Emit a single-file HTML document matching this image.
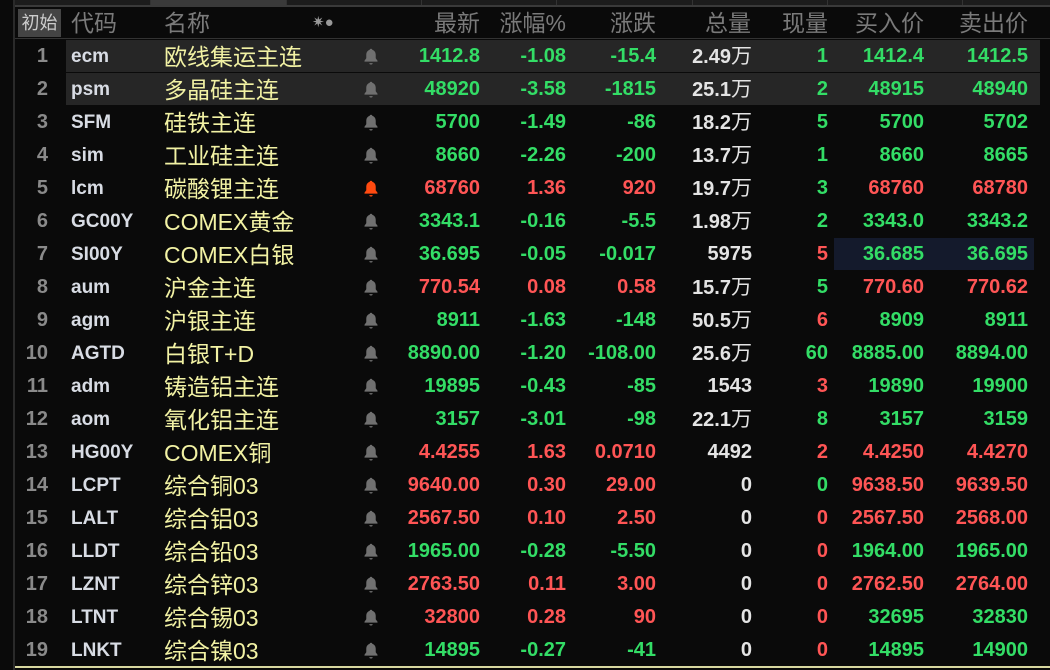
<!DOCTYPE html>
<html><head><meta charset="utf-8"><style>
body{margin:0;width:1050px;height:670px;background:#0a0a0a;overflow:hidden;font-family:"Liberation Sans","Noto Sans CJK SC",sans-serif;position:relative}
.top{position:absolute;left:14px;top:0;width:1036px;height:5px;background:#1c1c1c}
.top i{position:absolute;top:0;height:5px;width:1px;background:#333}
.vl{position:absolute;left:13px;top:0;width:2px;height:670px;background:#2a2a2a}
.hl{position:absolute;left:15px;top:5px;width:1035px;height:2px;background:#3a3a3a}
.hb{position:absolute;left:15px;top:38px;width:1035px;height:1px;background:#333}
.bl{position:absolute;left:15px;top:666px;width:1035px;height:2px;background:#d8d8a0}
.c{position:absolute;white-space:nowrap;line-height:33px}
.h{color:#7a7a7a;font-size:23px;line-height:34px;top:6px}
.r{text-align:right}
.g{color:#33dd66}.rd{color:#ff5555}.w{color:#e4e4e4}
.n{color:#8a8a8a;font-size:20px;font-weight:bold}
.cd{color:#d8dce4;font-size:19px;font-weight:bold}
.nm{color:#f2f2a4;font-size:23px}
.v{font-size:20px;font-weight:bold}
.row{position:absolute;left:0;width:1050px;height:33px}
</style></head><body>
<div class="top"><div style="position:absolute;left:136px;width:136px;height:5px;background:#3a3a3a"></div><i style="left:136px"></i><i style="left:272px"></i><i style="left:407px"></i><i style="left:542px"></i><i style="left:678px"></i><i style="left:813px"></i><i style="left:948px"></i></div>
<div class="vl"></div><div class="hl"></div>
<div style="position:absolute;left:18px;top:9px;width:43px;height:28px;background:#444;color:#ccc;font-size:18px;line-height:28px;text-align:center">初始</div>
<div class="c h" style="left:71px">代码</div>
<div class="c h" style="left:164px">名称</div>
<div class="c h" style="left:312px;font-size:15px;color:#999">✷●</div>
<div class="c h r" style="right:570px">最新</div>
<div class="c h r" style="right:484px">涨幅%</div>
<div class="c h r" style="right:394px">涨跌</div>
<div class="c h r" style="right:299px">总量</div>
<div class="c h r" style="right:222px">现量</div>
<div class="c h r" style="right:126px">买入价</div>
<div class="c h r" style="right:22px">卖出价</div>
<div class="hb"></div>
<div id="rows"></div>
<div class="bl"></div>
<script>
const D=[
["ecm","欧线集运主连","1412.8","-1.08","-15.4","2.49万","1","1412.4","1412.5","g","g","g"],
["psm","多晶硅主连","48920","-3.58","-1815","25.1万","2","48915","48940","g","g","g"],
["SFM","硅铁主连","5700","-1.49","-86","18.2万","5","5700","5702","g","g","g"],
["sim","工业硅主连","8660","-2.26","-200","13.7万","1","8660","8665","g","g","g"],
["lcm","碳酸锂主连","68760","1.36","920","19.7万","3","68760","68780","rd","g","rd"],
["GC00Y","COMEX黄金","3343.1","-0.16","-5.5","1.98万","2","3343.0","3343.2","g","g","g"],
["SI00Y","COMEX白银","36.695","-0.05","-0.017","5975","5","36.685","36.695","g","rd","g"],
["aum","沪金主连","770.54","0.08","0.58","15.7万","5","770.60","770.62","rd","g","rd"],
["agm","沪银主连","8911","-1.63","-148","50.5万","6","8909","8911","g","rd","g"],
["AGTD","白银T+D","8890.00","-1.20","-108.00","25.6万","60","8885.00","8894.00","g","g","g"],
["adm","铸造铝主连","19895","-0.43","-85","1543","3","19890","19900","g","rd","g"],
["aom","氧化铝主连","3157","-3.01","-98","22.1万","8","3157","3159","g","g","g"],
["HG00Y","COMEX铜","4.4255","1.63","0.0710","4492","2","4.4250","4.4270","rd","rd","rd"],
["LCPT","综合铜03","9640.00","0.30","29.00","0","0","9638.50","9639.50","rd","g","rd"],
["LALT","综合铝03","2567.50","0.10","2.50","0","0","2567.50","2568.00","rd","rd","rd"],
["LLDT","综合铅03","1965.00","-0.28","-5.50","0","0","1964.00","1965.00","g","rd","g"],
["LZNT","综合锌03","2763.50","0.11","3.00","0","0","2762.50","2764.00","rd","rd","rd"],
["LTNT","综合锡03","32800","0.28","90","0","0","32695","32830","rd","rd","g"],
["LNKT","综合镍03","14895","-0.27","-41","0","0","14895","14900","g","rd","g"]];
const bell=c=>`<svg width="16" height="18" viewBox="0 0 14 16"><path d="M7 1.5c.8 0 1.2.5 1.2 1 2 .6 3 2.3 3 4.5v3l1.6 2.2v.8H1.2v-.8L2.8 10V7c0-2.2 1-3.9 3-4.5 0-.5.4-1 1.2-1zM5.5 14.3h3c0 .8-.7 1.3-1.5 1.3s-1.5-.5-1.5-1.3z" fill="${c}"/></svg>`;
let h="";
D.forEach((d,i)=>{const t=39+i*33;
let bg=i<2?'<div style="position:absolute;left:66px;top:1px;width:974px;height:32px;background:#262626"></div>':'';
if(i==6)bg='<div style="position:absolute;left:834px;top:1px;width:200px;height:32px;background:#141a2c"></div>';
const m=d[3].startsWith('-')?'g':'rd';
h+=`<div class="row" style="top:${t}px">${bg}
<div class="c n r" style="right:1002px;top:1px">${i+1}</div>
<div class="c cd" style="left:71px;top:1px">${d[0]}</div>
<div class="c nm" style="left:164px;top:2px">${d[1]}</div>
<div class="c" style="left:363px;top:8px;line-height:18px">${bell(i==4?'#ff4a10':'#707070')}</div>
<div class="c v r ${d[9]}" style="right:570px;top:1px">${d[2]}</div>
<div class="c v r ${m}" style="right:484px;top:1px">${d[3]}</div>
<div class="c v r ${m}" style="right:394px;top:1px">${d[4]}</div>
<div class="c v r w" style="right:298px;top:1px">${d[5].replace('万','<span style="font-size:21px;font-weight:normal">万</span>')}</div>
<div class="c v r ${d[10]}" style="right:222px;top:1px">${d[6]}</div>
<div class="c v r ${d[11]}" style="right:126px;top:1px">${d[7]}</div>
<div class="c v r ${d[11]}" style="right:22px;top:1px">${d[8]}</div></div>`;});
document.getElementById('rows').innerHTML=h;
</script>
</body></html>
